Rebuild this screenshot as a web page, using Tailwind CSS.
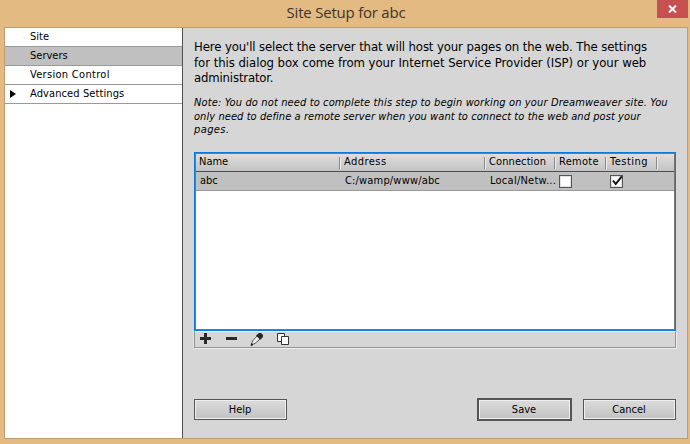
<!DOCTYPE html>
<html lang="en"><head><meta charset="utf-8"><title>Site Setup for abc</title>
<script src="https://cdn.jsdelivr.net/npm/@tailwindcss/browser@4"></script></head>
<body class="w-[690px] h-[444px] overflow-hidden bg-[#e2ba82] font-['DejaVu_Sans_Condensed','DejaVu_Sans',sans-serif] text-[11px] text-black">
<div class="w-[690px] h-[444px] pl-1 pr-0.5 flex flex-col">
  <header class="relative h-[27px] shrink-0 flex justify-center">
    <h1 class="text-[15px] leading-[25px] tracking-[-0.22px] font-[Open_Sans] text-[#40342a] whitespace-nowrap">Site Setup for abc</h1>
    <button class="absolute left-[653px] top-0 w-[31px] h-[18px] bg-[#c75050] flex items-center justify-center">
      <svg width="9" height="8" viewBox="0 0 9 8" stroke="#fff" stroke-width="2"><path d="M1 .5l7 7M8 .5l-7 7"/></svg>
    </button>
  </header>
  <div class="h-[412px] flex border border-[#bf9d6e] bg-[#d6d6d6]">
    <nav class="w-[178px] shrink-0 bg-white border-r border-[#4f4f4f] leading-[18px] whitespace-nowrap">
      <div class="h-[19px] pl-[25px] border-b border-[#999]"><span>Site</span></div>
      <div class="h-[19px] pl-[25px] border-b border-[#999] bg-[#c0c0c0]"><span>Servers</span></div>
      <div class="h-[19px] pl-[25px] border-b border-[#999]"><span class="tracking-[0.3px]">Version Control</span></div>
      <div class="h-[19px] border-b border-[#999] flex"><svg class="w-[25px] h-[18px]" viewBox="0 0 25 18"><path d="M5 5v8l6-4z"/></svg><span class="tracking-[0.1px]">Advanced Settings</span></div>
    </nav>
    <main class="flex-1 pl-[11px] flex flex-col">
      <div class="h-[67px] pt-[11px] text-[13px] leading-[15.5px] whitespace-nowrap">
        <p class="tracking-[-0.11px]">Here you'll select the server that will host your pages on the web. The settings</p>
        <p class="tracking-[-0.04px]">for this dialog box come from your Internet Service Provider (ISP) or your web</p>
        <p class="tracking-[-0.16px]">administrator.</p>
      </div>
      <div class="h-[49px] pt-px italic leading-[13.5px] whitespace-nowrap">
        <p class="tracking-[0.125px]">Note: You do not need to complete this step to begin working on your Dreamweaver site. You</p>
        <p class="tracking-[0.07px]">only need to define a remote server when you want to connect to the web and post your</p>
        <p class="tracking-[0.4px]">pages.</p>
      </div>
      <div class="mt-2 w-[482px] h-[179px] shrink-0 border border-[#0a7bdc] bg-white">
        <div class="h-[177px] border border-[#777]">
          <div class="h-[18px] border-b border-[#4c4c4c] bg-linear-to-b from-[#dedede] to-[#c3c3c3] flex leading-[15px] whitespace-nowrap">
            <div class="w-[145px] pl-[3px] flex justify-between"><span>Name</span><i class="w-0.5 h-3 mt-[3px] border-l border-[#888] bg-[#eee]"></i></div>
            <div class="w-[145px] pl-[3px] flex justify-between"><span class="tracking-[0.45px]">Address</span><i class="w-0.5 h-3 mt-[3px] border-l border-[#888] bg-[#eee]"></i></div>
            <div class="w-[70px] pl-[3px] flex justify-between"><span class="tracking-[0.1px]">Connection</span><i class="w-0.5 h-3 mt-[3px] border-l border-[#888] bg-[#eee]"></i></div>
            <div class="w-[51px] pl-[3px] flex justify-between"><span class="tracking-[0.3px]">Remote</span><i class="w-0.5 h-3 mt-[3px] border-l border-[#888] bg-[#eee]"></i></div>
            <div class="w-[51px] pl-[3px] flex justify-between"><span class="tracking-[0.5px]">Testing</span><i class="w-0.5 h-3 mt-[3px] border-l border-[#888] bg-[#eee]"></i></div>
          </div>
          <div class="h-[19px] border-b border-[#999] bg-[#c0c0c0] flex leading-[17px] whitespace-nowrap">
            <div class="w-[145px] pl-1"><span>abc</span></div>
            <div class="w-[145px] pl-1"><span class="tracking-[0.17px]">C:/wamp/www/abc</span></div>
            <div class="w-[73px] pl-1"><span class="tracking-[0.25px]">Local/Netw...</span></div>
            <div class="w-[51px] pt-[3px]"><div class="w-[13px] h-[13px] border border-[#555] bg-white shadow-[inset_0_0_0_1px_#e0e0e0]"></div></div>
            <div class="pt-[3px]"><div class="w-[13px] h-[13px] border border-[#555] bg-white shadow-[inset_0_0_0_1px_#e0e0e0]"><svg class="-mt-px" width="12" height="12" viewBox="0 0 12 12" fill="none" stroke="#111" stroke-width="2"><path d="M2 5.5L4.7 9L10.8 1.3"/></svg></div></div>
          </div>
        </div>
      </div>
      <div class="w-[482px] h-[17px] shrink-0 border border-t-[#efefef] border-[#929292] shadow-[1px_1px_0_#f0f0f0,-1px_0_0_#e6e6e6] flex">
        <svg width="110" height="15" viewBox="195 332 110 15">
          <path d="M205.500 333v11M200 338.500h11" stroke="#292929" stroke-width="3"/>
          <path d="M226 338.500h11" stroke="#292929" stroke-width="3"/>
          <path d="M251.500 344.500l1-3.500 4.500-5 3 3-5 4.500z" fill="#eee" stroke="#555"/>
          <path d="M256 335.500l3-2.500h2l2 2v2l-2.700 2.700z" fill="#282828"/>
          <path d="M251 345.500l.5-2 1.500 1.500z" fill="#111" stroke="#111" stroke-width=".6"/>
          <path d="M277.500 333.500h7v8h-7z" fill="#fff" stroke="#333"/>
          <path d="M281.500 336.500h7v8h-7z" fill="#fff" stroke="#333"/>
        </svg>
      </div>
      <div class="mt-[50px] h-[23px] w-[482px] flex items-center whitespace-nowrap">
        <button class="w-[93px] h-[21px] border border-[#555] shadow-[inset_0_0_0_1px_#efefef] bg-linear-to-b from-[#dcdcdc] to-[#c2c2c2] leading-[18px] pr-px">Help</button>
        <button class="ml-[190px] w-[95px] h-[23px] border-2 border-[#555] shadow-[inset_0_0_0_1px_#efefef] bg-linear-to-b from-[#dcdcdc] to-[#c2c2c2] leading-[18px] pr-px">Save</button>
        <button class="ml-[11px] w-[93px] h-[21px] border border-[#555] shadow-[inset_0_0_0_1px_#efefef] bg-linear-to-b from-[#dcdcdc] to-[#c2c2c2] leading-[18px] pr-px">Cancel</button>
      </div>
    </main>
  </div>
</div>
</body></html>
